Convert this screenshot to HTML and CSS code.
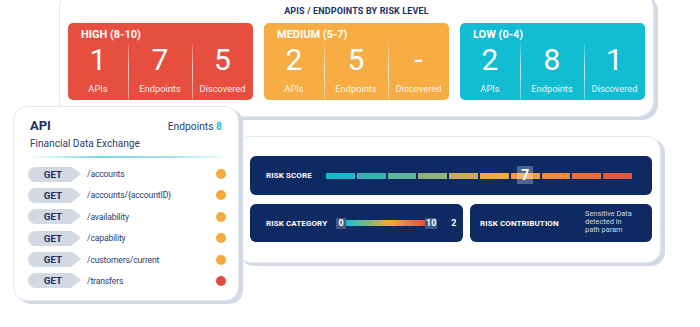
FILE: index.html
```html
<!DOCTYPE html>
<html lang="en">
<head>
<meta charset="utf-8">
<title>API Risk</title>
<link rel="stylesheet" href="styles.css">
</head>
<body>
<div class="stage">
  <section class="card levels-card">
    <h2 class="title">APIS / ENDPOINTS BY RISK LEVEL</h2>
    <div class="levels">
      <div class="level high">
        <div class="level-name">HIGH (8-10)</div>
        <div class="stats">
          <div class="stat"><span class="num">1</span><span class="lbl">APIs</span></div>
          <div class="stat"><span class="num">7</span><span class="lbl">Endpoints</span></div>
          <div class="stat"><span class="num">5</span><span class="lbl">Discovered</span></div>
        </div>
      </div>
      <div class="level medium">
        <div class="level-name">MEDIUM (5-7)</div>
        <div class="stats">
          <div class="stat"><span class="num">2</span><span class="lbl">APIs</span></div>
          <div class="stat"><span class="num">5</span><span class="lbl">Endpoints</span></div>
          <div class="stat"><span class="num">-</span><span class="lbl">Discovered</span></div>
        </div>
      </div>
      <div class="level low">
        <div class="level-name">LOW (0-4)</div>
        <div class="stats">
          <div class="stat"><span class="num">2</span><span class="lbl">APIs</span></div>
          <div class="stat"><span class="num">8</span><span class="lbl">Endpoints</span></div>
          <div class="stat"><span class="num">1</span><span class="lbl">Discovered</span></div>
        </div>
      </div>
    </div>
  </section>

  <section class="card score-card">
    <div class="panel score-panel">
      <span class="panel-label score-label">RISK SCORE</span>
      <div class="segments">
        <span class="seg s1"></span>
        <span class="seg s2"></span>
        <span class="seg s3"></span>
        <span class="seg s4"></span>
        <span class="seg s5"></span>
        <span class="seg s6"></span>
        <span class="seg s7"><span class="marker">7</span></span>
        <span class="seg s8"></span>
        <span class="seg s9"></span>
        <span class="seg s10"></span>
      </div>
    </div>
    <div class="panel-row">
      <div class="panel category-panel">
        <span class="panel-label category-label">RISK CATEGORY</span>
        <span class="tag">0</span>
        <span class="grad-bar"></span>
        <span class="tag">10</span>
        <span class="cat-value">2</span>
      </div>
      <div class="panel contribution-panel">
        <span class="panel-label contribution-label">RISK CONTRIBUTION</span>
        <span class="contribution-text">Sensitive Data<br>detected in<br>path param</span>
      </div>
    </div>
  </section>

  <section class="card api-card">
    <div class="api-head">
      <span class="api-title">API</span>
      <span class="api-count">Endpoints <b>8</b></span>
    </div>
    <div class="api-name">Financial Data Exchange</div>
    <div class="api-divider"></div>
    <ul class="endpoints">
      <li class="endpoint"><span class="method">GET</span><span class="path">/accounts</span><span class="dot warn"></span></li>
      <li class="endpoint"><span class="method">GET</span><span class="path">/accounts/{accountID}</span><span class="dot warn"></span></li>
      <li class="endpoint"><span class="method">GET</span><span class="path">/availability</span><span class="dot warn"></span></li>
      <li class="endpoint"><span class="method">GET</span><span class="path">/capability</span><span class="dot warn"></span></li>
      <li class="endpoint"><span class="method">GET</span><span class="path">/customers/current</span><span class="dot warn"></span></li>
      <li class="endpoint"><span class="method">GET</span><span class="path">/transfers</span><span class="dot danger"></span></li>
    </ul>
  </section>
</div>
</body>
</html>
```

FILE: styles.css
```css
* { box-sizing: border-box; }

html, body {
  margin: 0;
  padding: 0;
  background: #ffffff;
}

body {
  font-family: Roboto, "Liberation Sans", sans-serif;
  color: #1b2f66;
}

.stage {
  position: relative;
  width: 700px;
  height: 327px;
  overflow: hidden;
}

.card {
  position: absolute;
  background: #ffffff;
  border: 1px solid #e0e8f1;
  box-shadow: 4px 3px 0 #d3dae5;
}

/* ---------- top card ---------- */
.levels-card {
  left: 59px;
  top: -8px;
  width: 595px;
  height: 125px;
  border-radius: 16px;
  padding: 13px 8px 0 8px;
  z-index: 1;
}

.title {
  margin: 0 0 7px 0;
  font-size: 9px;
  line-height: 10px;
  font-weight: 700;
  text-align: center;
  color: #1b2f66;
  letter-spacing: 0.15px;
}

.levels {
  display: flex;
  gap: 11px;
}

.level {
  width: 185px;
  height: 77px;
  border-radius: 5px;
  color: #ffffff;
  display: flex;
  flex-direction: column;
}

.high { background: #e64f40; }
.medium { background: #f7ad43; }
.low { background: #12bdd3; }

.level-name {
  font-size: 11px;
  line-height: 12px;
  font-weight: 700;
  padding: 6px 0 0 13px;
  height: 21px;
}

.stats {
  flex: 1;
  display: grid;
  grid-template-columns: 60px 64px 1fr;
}

.stat {
  position: relative;
  display: flex;
  flex-direction: column;
  align-items: center;
  padding-top: 1px;
}

.stat + .stat::before {
  content: "";
  position: absolute;
  left: 0;
  top: 0;
  bottom: 0;
  width: 1px;
  background: linear-gradient(rgba(255,255,255,0.15), rgba(255,255,255,0.75) 45%, rgba(255,255,255,0.35));
}

.num {
  font-size: 30px;
  line-height: 30px;
  font-weight: 400;
}

.lbl {
  margin-top: 8px;
  font-size: 9.3px;
  line-height: 12px;
  color: rgba(255,255,255,0.92);
}

/* ---------- score card ---------- */
.score-card {
  left: 236px;
  top: 136px;
  width: 425px;
  height: 127px;
  border-radius: 14px;
  padding: 19px 8px 0 13px;
  z-index: 2;
}

.panel {
  background: #0e2a63;
  border-radius: 6px;
  display: flex;
  align-items: center;
  color: #ffffff;
}

.panel-label {
  font-size: 8px;
  font-weight: 700;
  letter-spacing: 0.1px;
  flex: none;
}

.score-panel {
  height: 39px;
  padding: 0 20px 0 16px;
}

.score-label { width: 60px; }

.segments {
  flex: 1;
  display: flex;
  gap: 2px;
  height: 6px;
}

.seg {
  flex: 1;
  height: 6px;
  position: relative;
}

.s1 { background: #19b9cd; }
.s2 { background: #36b5b2; }
.s3 { background: #5fb294; }
.s4 { background: #93b078; }
.s5 { background: #c9ad58; }
.s6 { background: #f1aa40; }
.s7 { background: #f39d3c; }
.s8 { background: #ef8a3a; }
.s9 { background: #ea713c; }
.s10 { background: #e5563e; }

.marker {
  position: absolute;
  left: 50%;
  top: 50%;
  transform: translate(-50%, -55%);
  width: 16px;
  height: 18px;
  background: rgba(255,255,255,0.28);
  color: #ffffff;
  font-size: 14px;
  font-weight: 700;
  line-height: 18px;
  text-align: center;
}

.panel-row {
  display: flex;
  gap: 7px;
  margin-top: 9px;
}

.category-panel {
  width: 213px;
  height: 38px;
  padding-left: 16px;
}

.category-label { width: 70px; }

.tag {
  height: 11px;
  min-width: 10px;
  padding: 0 1px;
  background: rgba(255,255,255,0.22);
  font-size: 9px;
  font-weight: 700;
  line-height: 11px;
  text-align: center;
}

.grad-bar {
  width: 79px;
  height: 6px;
  background: linear-gradient(90deg, #17bfd0 0%, #8cb47a 30%, #f5a93b 55%, #ee7a3c 78%, #e5503e 100%);
}

.cat-value {
  margin-left: 14px;
  font-size: 9px;
  font-weight: 700;
}

.contribution-panel {
  flex: 1;
  height: 38px;
  padding-left: 10px;
}

.contribution-label { width: 105px; }

.contribution-text {
  font-size: 7.4px;
  line-height: 8px;
  color: rgba(255,255,255,0.82);
  margin-top: -2px;
}

/* ---------- api card ---------- */
.api-card {
  left: 13px;
  top: 106px;
  width: 226px;
  height: 195px;
  border-radius: 14px;
  padding: 11px 12px 0 16px;
  z-index: 3;
}

.api-head {
  display: flex;
  justify-content: space-between;
  align-items: baseline;
  margin-right: 4px;
  height: 16px;
}

.api-title {
  font-size: 13px;
  line-height: 16px;
  font-weight: 700;
  color: #1b2f66;
}

.api-count {
  font-size: 10.3px;
  line-height: 16px;
  color: #2a3d70;
}

.api-count b {
  color: #1fc0d4;
  font-weight: 700;
}

.api-name {
  margin-top: 3px;
  font-size: 10.1px;
  line-height: 13px;
  color: #2a3d70;
}

.api-divider {
  margin: 6px 4px 0 0;
  height: 1.5px;
  background: linear-gradient(90deg, rgba(120,215,228,0) 0%, #7dd6e2 35%, #a9e4ec 75%, rgba(200,240,245,0.3) 100%);
}

.endpoints {
  list-style: none;
  margin: 9px 0 0 -2px;
  padding: 0;
  display: flex;
  flex-direction: column;
  gap: 6.4px;
}

.endpoint {
  display: flex;
  align-items: center;
  height: 15px;
}

.method {
  position: relative;
  width: 44px;
  height: 15px;
  background: #d3d9e3;
  border-radius: 8px 0 0 8px;
  font-size: 9.8px;
  font-weight: 700;
  line-height: 15px;
  color: #1b2f66;
  text-align: center;
  padding-left: 6px;
  flex: none;
}

.method::after {
  content: "";
  position: absolute;
  left: 44px;
  top: 0;
  border-top: 7.5px solid transparent;
  border-bottom: 7.5px solid transparent;
  border-left: 9px solid #d3d9e3;
}

.path {
  flex: 1;
  margin-left: 15px;
  font-size: 8.6px;
  letter-spacing: -0.15px;
  color: #2a3d70;
}

.dot {
  width: 10px;
  height: 10px;
  border-radius: 50%;
  flex: none;
}

.warn { background: #f6a93b; }
.danger { background: #e54b3e; }
```
